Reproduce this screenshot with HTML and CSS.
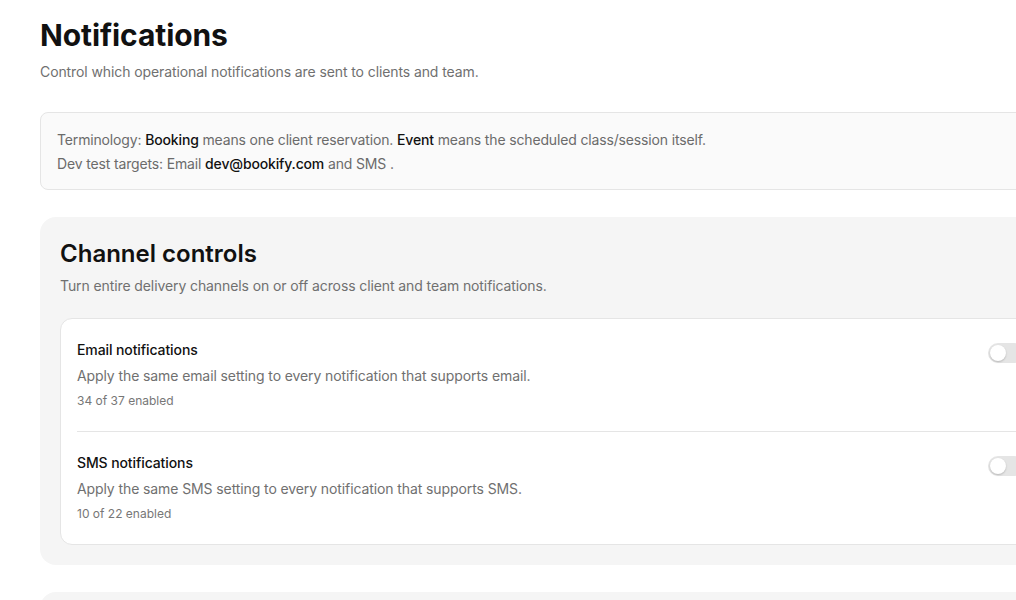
FILE: index.html
```html
<!DOCTYPE html>
<html lang="en">
<head>
    <meta charset="UTF-8">
    <meta name="viewport" content="width=device-width, initial-scale=1.0">
    <title>Notifications</title>
    <link rel="stylesheet" href="styles.css">
</head>
<body>
    <main class="page">
        <h1 class="page-title">Notifications</h1>
        <p class="page-subtitle">Control which operational notifications are sent to clients and team.</p>

        <div class="info-box">
            <p>Terminology: <strong>Booking</strong> means one client reservation. <strong>Event</strong> means the scheduled class/session itself.</p>
            <p>Dev test targets: Email <strong>dev@bookify.com</strong> and SMS .</p>
        </div>

        <section class="section">
            <h2 class="section-title">Channel controls</h2>
            <p class="section-subtitle">Turn entire delivery channels on or off across client and team notifications.</p>

            <div class="card">
                <div class="row">
                    <div class="row-text">
                        <div class="row-title">Email notifications</div>
                        <div class="row-desc">Apply the same email setting to every notification that supports email.</div>
                        <div class="row-count">34 of 37 enabled</div>
                    </div>
                    <button class="toggle" aria-label="Email notifications"><span class="knob"></span></button>
                </div>
                <div class="row">
                    <div class="row-text">
                        <div class="row-title">SMS notifications</div>
                        <div class="row-desc">Apply the same SMS setting to every notification that supports SMS.</div>
                        <div class="row-count">10 of 22 enabled</div>
                    </div>
                    <button class="toggle" aria-label="SMS notifications"><span class="knob"></span></button>
                </div>
            </div>
        </section>

        <section class="section"></section>
    </main>
</body>
</html>
```

FILE: styles.css
```css
body {
    font-family: 'Inter', 'Liberation Sans', sans-serif;
    background-color: #ffffff;
    color: #111111;
    margin: 0;
    padding: 0;
    overflow: hidden;
}
.page {
    width: 1021px;
    padding: 17px 40px 40px;
}
.page-title {
    font-size: 30px;
    line-height: 36px;
    font-weight: 700;
    margin: 0;
    letter-spacing: -0.1px;
}
.page-subtitle {
    font-size: 14px;
    line-height: 20px;
    color: #707070;
    margin: 9px 0 0;
    letter-spacing: -0.1px;
}
.info-box {
    margin-top: 30px;
    border: 1px solid #e5e5e5;
    border-radius: 8px;
    background-color: #fafafa;
    padding: 15px 16px 13px;
}
.info-box p {
    margin: 0;
    font-size: 14px;
    line-height: 24px;
    color: #6b6b6b;
    letter-spacing: -0.15px;
}
.info-box strong {
    font-weight: 500;
    color: #111111;
}
.section {
    margin-top: 27px;
    background-color: #f5f5f5;
    border-radius: 16px;
    padding: 21px 20px 20px;
}
.section-title {
    font-size: 24px;
    line-height: 32px;
    font-weight: 600;
    margin: 0;
}
.section-subtitle {
    font-size: 14px;
    line-height: 20px;
    color: #707070;
    margin: 6px 0 0;
    letter-spacing: -0.1px;
}
.card {
    margin-top: 22px;
    background-color: #ffffff;
    border: 1px solid #e5e5e5;
    border-radius: 12px;
    padding: 0 16px;
}
.row {
    display: flex;
    justify-content: space-between;
    align-items: flex-start;
    padding: 21px 0 20px;
}
.row + .row {
    border-top: 1px solid #e5e5e5;
}
.row-title {
    font-size: 14px;
    line-height: 20px;
    font-weight: 500;
    letter-spacing: -0.1px;
}
.row-desc {
    margin-top: 6px;
    font-size: 14px;
    line-height: 20px;
    color: #707070;
    letter-spacing: -0.1px;
}
.row-count {
    margin-top: 5px;
    font-size: 12px;
    line-height: 20px;
    color: #777777;
}
.toggle {
    margin-top: 3px;
    width: 36px;
    height: 20px;
    border: none;
    border-radius: 10px;
    background-color: #e5e5e5;
    padding: 2px;
    display: flex;
    cursor: pointer;
}
.knob {
    width: 16px;
    height: 16px;
    border-radius: 50%;
    background-color: #ffffff;
    box-shadow: 0 1px 2px rgba(0, 0, 0, 0.2);
}
```
